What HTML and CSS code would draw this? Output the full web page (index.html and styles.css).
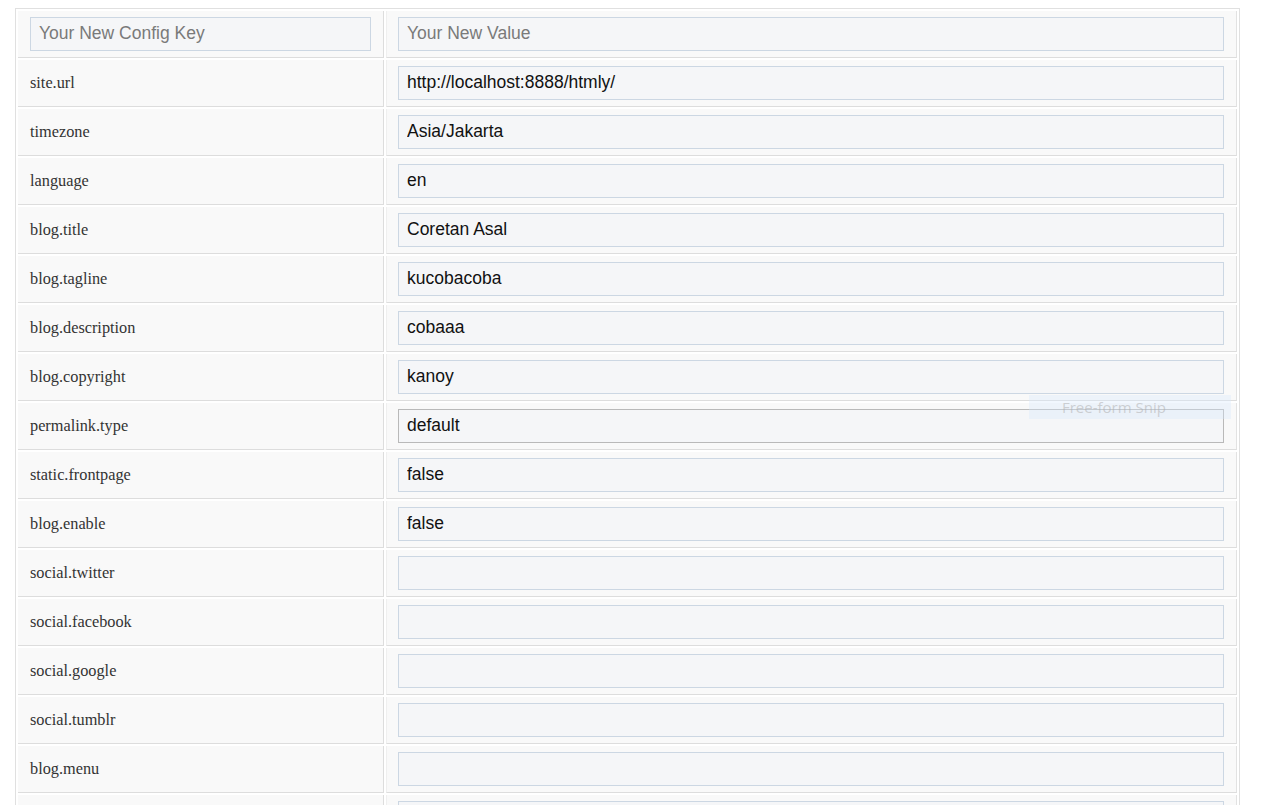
FILE: index.html
```html
<!DOCTYPE html>
<html lang="en">
<head>
<meta charset="utf-8">
<title>Config</title>
<link rel="stylesheet" href="styles.css">
</head>
<body>
<div class="page">
  <table class="config">
    <tbody>
      <tr>
        <td class="key-cell"><input class="field" type="text" placeholder="Your New Config Key"></td>
        <td class="val-cell"><input class="field" type="text" placeholder="Your New Value"></td>
      </tr>
      <tr><td class="key-cell label">site.url</td><td class="val-cell"><input class="field" type="text" value="http://localhost:8888/htmly/"></td></tr>
      <tr><td class="key-cell label">timezone</td><td class="val-cell"><input class="field" type="text" value="Asia/Jakarta"></td></tr>
      <tr><td class="key-cell label">language</td><td class="val-cell"><input class="field" type="text" value="en"></td></tr>
      <tr><td class="key-cell label">blog.title</td><td class="val-cell"><input class="field" type="text" value="Coretan Asal"></td></tr>
      <tr><td class="key-cell label">blog.tagline</td><td class="val-cell"><input class="field" type="text" value="kucobacoba"></td></tr>
      <tr><td class="key-cell label">blog.description</td><td class="val-cell"><input class="field" type="text" value="cobaaa"></td></tr>
      <tr><td class="key-cell label">blog.copyright</td><td class="val-cell"><input class="field" type="text" value="kanoy"></td></tr>
      <tr><td class="key-cell label">permalink.type</td><td class="val-cell"><input class="field field-hover" type="text" value="default"></td></tr>
      <tr><td class="key-cell label">static.frontpage</td><td class="val-cell"><input class="field" type="text" value="false"></td></tr>
      <tr><td class="key-cell label">blog.enable</td><td class="val-cell"><input class="field" type="text" value="false"></td></tr>
      <tr><td class="key-cell label">social.twitter</td><td class="val-cell"><input class="field" type="text" value=""></td></tr>
      <tr><td class="key-cell label">social.facebook</td><td class="val-cell"><input class="field" type="text" value=""></td></tr>
      <tr><td class="key-cell label">social.google</td><td class="val-cell"><input class="field" type="text" value=""></td></tr>
      <tr><td class="key-cell label">social.tumblr</td><td class="val-cell"><input class="field" type="text" value=""></td></tr>
      <tr><td class="key-cell label">blog.menu</td><td class="val-cell"><input class="field" type="text" value=""></td></tr>
      <tr><td class="key-cell label"></td><td class="val-cell"><input class="field" type="text" value=""></td></tr>
    </tbody>
  </table>
  <div class="snip-hint">Free-form Snip</div>
</div>
</body>
</html>
```

FILE: styles.css
```css
html, body {
  margin: 0;
  padding: 0;
  background: #ffffff;
}

body {
  height: 805px;
  overflow: hidden;
}

.page {
  position: relative;
  padding: 8px 0 0 15px;
}

.config {
  width: 1225px;
  border: 1px solid #e0e0e0;
  border-collapse: separate;
  border-spacing: 2px;
  table-layout: fixed;
}

.config td {
  background: #f9f9f9;
  padding: 6px 12px;
  border-bottom: 1px solid #dddddd;
  vertical-align: middle;
}

.key-cell {
  width: 341px;
  border-right: 1px solid #dddddd;
}

.val-cell {
  border-right: 1px solid #e2e2e2;
  border-left: 1px solid #efefef;
  padding-left: 11px !important;
}

.label {
  font-family: "Liberation Serif", "Times New Roman", serif;
  font-size: 16.3px;
  color: #333333;
}

.field {
  display: block;
  box-sizing: border-box;
  width: 100%;
  height: 34px;
  margin: 0;
  padding: 0 8px 2px;
  background: #f5f6f8;
  border: 1px solid #ccd7e3;
  border-radius: 0;
  font-family: "Liberation Sans", Arial, sans-serif;
  font-size: 17.5px;
  color: #111111;
  outline: none;
}

.field::placeholder {
  color: #7a7a7a;
}

.field-hover {
  border-color: #b9b9b9;
}

.snip-hint {
  position: absolute;
  left: 1029px;
  top: 395px;
  box-sizing: border-box;
  width: 202px;
  height: 24px;
  padding-left: 33px;
  background: rgba(214, 232, 252, 0.35);
  color: rgba(170, 170, 170, 0.5);
  font-family: "Open Sans", "Noto Sans", sans-serif;
  font-size: 15px;
  line-height: 24px;
  text-align: left;
  pointer-events: none;
}
```
